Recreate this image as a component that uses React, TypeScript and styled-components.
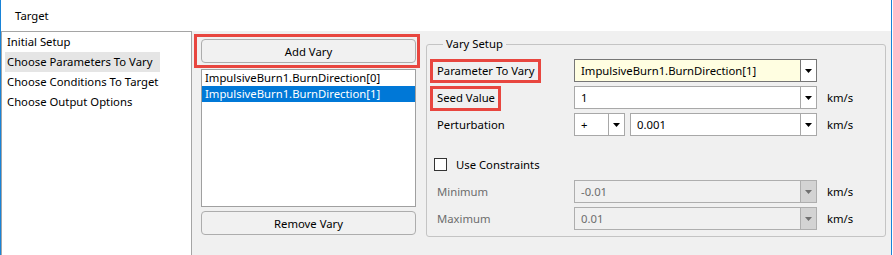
import styled, { createGlobalStyle } from 'styled-components'

const GlobalStyle = createGlobalStyle`
  html, body {
    margin: 0;
    padding: 0;
    background: #ffffff;
  }
  * {
    box-sizing: border-box;
  }
`

const Frame = styled.div`
  width: 892px;
  height: 255px;
  display: flex;
  flex-direction: column;
  border-left: 1px solid #1883d7;
  border-right: 1px solid #1883d7;
  font-family: "Segoe UI", "Noto Sans", sans-serif;
  font-size: 11.3px;
  color: #000;
  overflow: hidden;
`

const TitleBar = styled.div`
  height: 31px;
  flex: none;
  background: #fff;
  padding-left: 14px;
  line-height: 31px;
`

const Body = styled.div`
  flex: 1;
  display: flex;
  background: #f0f0f0;
`

const NavPane = styled.div`
  width: 191px;
  flex: none;
  background: #fff;
  border: 1px solid #a5a5a5;
  border-bottom: none;
  padding-left: 3px;
`

const NavItem = styled.div<{ $selected?: boolean }>`
  width: 155px;
  height: 20px;
  line-height: 20px;
  padding-left: 2px;
  white-space: nowrap;
  background: ${(p) => (p.$selected ? '#e5e5e5' : 'transparent')};
`

const VaryColumn = styled.div`
  width: 229px;
  flex: none;
  padding: 8px 5px 0 9px;
  display: flex;
  flex-direction: column;
`

const Highlight = styled.div<{ $t: number; $r: number; $b: number; $l: number }>`
  position: relative;
  &::after {
    content: '';
    position: absolute;
    top: ${(p) => -p.$t}px;
    right: ${(p) => -p.$r}px;
    bottom: ${(p) => -p.$b}px;
    left: ${(p) => -p.$l}px;
    border: 3px solid #e8463f;
    pointer-events: none;
  }
`

const LabelMark = styled(Highlight)`
  display: inline-block;
  line-height: 23px;
`

const PushButton = styled.button`
  width: 215px;
  height: 24px;
  display: block;
  background: #f1f1f1;
  border: 1px solid #adadad;
  border-radius: 4px;
  font: inherit;
  color: #000;
  padding: 0;
`

const VaryList = styled.div`
  width: 215px;
  height: 138px;
  margin: 6px 0 4px;
  background: #fff;
  border: 1px solid #a0a0a0;
`

const VaryItem = styled.div<{ $selected?: boolean }>`
  height: 16px;
  line-height: 16px;
  padding-left: 3px;
  white-space: nowrap;
  background: ${(p) => (p.$selected ? '#0078d7' : 'transparent')};
  color: ${(p) => (p.$selected ? '#fff' : '#000')};
`

const SetupArea = styled.div`
  flex: 1;
  padding: 5px 0 0 5px;
`

const GroupBox = styled.fieldset`
  width: 460px;
  margin: 0;
  border: 1px solid #c4c4c4;
  border-radius: 3px;
  padding: 7px 0 6px 10px;
  display: flex;
  flex-direction: column;
  gap: 4px;
`

const Legend = styled.legend`
  margin-left: 6px;
  padding: 0 3px;
  line-height: 16px;
`

const FormRow = styled.div<{ $top?: number }>`
  display: flex;
  align-items: center;
  height: 23px;
  margin-top: ${(p) => p.$top ?? 0}px;
`

const FieldLabel = styled.div<{ $disabled?: boolean }>`
  width: 137px;
  flex: none;
  color: ${(p) => (p.$disabled ? '#6d6d6d' : '#000')};
`

type Tone = 'focus' | 'normal' | 'disabled'

const tones = {
  focus: { bg: '#fffee1', border: '#767676', arrowBg: '#fff', text: '#000' },
  normal: { bg: '#fff', border: '#a8a8a8', arrowBg: '#fff', text: '#000' },
  disabled: { bg: '#f0f0f0', border: '#aeaeae', arrowBg: '#d3d3d3', text: '#6d6d6d' },
}

const ComboBox = styled.div<{ $width: number; $tone: Tone; $gap?: number }>`
  width: ${(p) => p.$width}px;
  height: 100%;
  display: flex;
  flex: none;
  margin-right: ${(p) => p.$gap ?? 0}px;
  background: ${(p) => tones[p.$tone].bg};
  border: 1px solid ${(p) => tones[p.$tone].border};
  color: ${(p) => tones[p.$tone].text};
`

const ComboText = styled.div`
  flex: 1;
  padding-left: 6px;
  display: flex;
  align-items: center;
  white-space: nowrap;
  overflow: hidden;
`

const ComboArrow = styled.div<{ $tone: Tone }>`
  width: 16px;
  flex: none;
  display: flex;
  align-items: center;
  justify-content: center;
  background: ${(p) => tones[p.$tone].arrowBg};
  border-left: 1px solid ${(p) => tones[p.$tone].border};
  color: ${(p) => (p.$tone === 'disabled' ? '#707070' : '#000')};
`

const Unit = styled.span`
  margin-left: 10px;
`

const CheckBox = styled.span`
  width: 13px;
  height: 13px;
  margin-left: -3px;
  background: #fff;
  border: 1px solid #333;
`

const CheckLabel = styled.span`
  margin-left: 9px;
`

function Arrow() {
  return (
    <svg width="7" height="4" viewBox="0 0 7 4">
      <path d="M0 0H7L3.5 4Z" fill="currentColor" />
    </svg>
  )
}

function Combo({ value, width, tone = 'normal', gap }: { value: string; width: number; tone?: Tone; gap?: number }) {
  return (
    <ComboBox $width={width} $tone={tone} $gap={gap}>
      <ComboText>{value}</ComboText>
      <ComboArrow $tone={tone}>
        <Arrow />
      </ComboArrow>
    </ComboBox>
  )
}

const navItems = [
  'Initial Setup',
  'Choose Parameters To Vary',
  'Choose Conditions To Target',
  'Choose Output Options',
]

export default function App() {
  return (
    <>
      <GlobalStyle />
      <Frame>
        <TitleBar>Target</TitleBar>
        <Body>
          <NavPane>
            {navItems.map((item, i) => (
              <NavItem key={item} $selected={i === 1}>
                {item}
              </NavItem>
            ))}
          </NavPane>

          <VaryColumn>
            <Highlight $t={5} $r={4} $b={5} $l={7}>
              <PushButton>Add Vary</PushButton>
            </Highlight>
            <VaryList>
              <VaryItem>ImpulsiveBurn1.BurnDirection[0]</VaryItem>
              <VaryItem $selected>ImpulsiveBurn1.BurnDirection[1]</VaryItem>
            </VaryList>
            <PushButton>Remove Vary</PushButton>
          </VaryColumn>

          <SetupArea>
            <GroupBox>
              <Legend>Vary Setup</Legend>
              <FormRow>
                <FieldLabel>
                  <LabelMark $t={0} $r={6} $b={1} $l={7}>
                    Parameter To Vary
                  </LabelMark>
                </FieldLabel>
                <Combo value="ImpulsiveBurn1.BurnDirection[1]" width={243} tone="focus" />
              </FormRow>
              <FormRow>
                <FieldLabel>
                  <LabelMark $t={0} $r={6} $b={2} $l={7}>
                    Seed Value
                  </LabelMark>
                </FieldLabel>
                <Combo value="1" width={243} />
                <Unit>km/s</Unit>
              </FormRow>
              <FormRow>
                <FieldLabel>Perturbation</FieldLabel>
                <Combo value="+" width={51} gap={5} />
                <Combo value="0.001" width={187} />
                <Unit>km/s</Unit>
              </FormRow>
              <FormRow $top={13}>
                <CheckBox />
                <CheckLabel>Use Constraints</CheckLabel>
              </FormRow>
              <FormRow>
                <FieldLabel $disabled>Minimum</FieldLabel>
                <Combo value="-0.01" width={243} tone="disabled" />
                <Unit>km/s</Unit>
              </FormRow>
              <FormRow>
                <FieldLabel $disabled>Maximum</FieldLabel>
                <Combo value="0.01" width={243} tone="disabled" />
                <Unit>km/s</Unit>
              </FormRow>
            </GroupBox>
          </SetupArea>
        </Body>
      </Frame>
    </>
  )
}
